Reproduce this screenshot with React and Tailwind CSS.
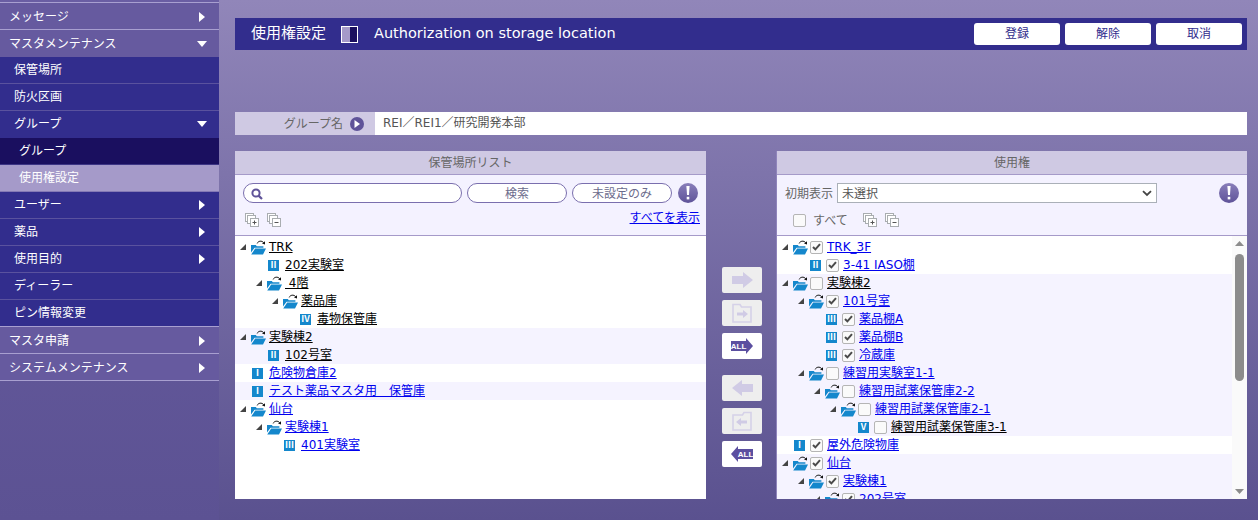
import React from "react";

function Tri({ dir = "right" }) {
  return dir === "right" ? (
    <svg width="6" height="10" viewBox="0 0 6 10"><polygon points="0,0 6,5 0,10" fill="#fff" /></svg>
  ) : (
    <svg width="10" height="6" viewBox="0 0 10 6"><polygon points="0,0 10,0 5,6" fill="#fff" /></svg>
  );
}

function NavRow({ label, kind, arrow }) {
  const styles = {
    top: "bg-[#665a9f] border-[#a89fd0] pl-[9px] pt-[1px]",
    topOpen: "bg-[#665a9f] border-[#665a9f] pl-[9px] pt-[1px]",
    sub: "bg-[#322d8d] border-[#5a529e] pl-[14px]",
    subOpen: "bg-[#322d8d] border-[#322d8d] pl-[14px]",
    leaf: "bg-[#1a0f5f] border-[#3d3585] pl-[19px]",
    active: "bg-[#a59ac9] border-[#8479b5] pl-[19px]",
    subLast: "bg-[#322d8d] border-[#a89fd0] pl-[14px]",
  };
  return (
    <div className={`flex items-center h-[27px] border-b text-[12px] text-white ${styles[kind]}`}>
      <span className="flex-1">{label}</span>
      {arrow && (
        <span className="w-[10px] mr-[12px] flex justify-center">
          <Tri dir={arrow} />
        </span>
      )}
    </div>
  );
}

function Sidebar() {
  return (
    <nav className="w-[219px] shrink-0 h-[520px] bg-linear-to-b from-[#6a5ea3] to-[#5c5293]">
      <div className="pt-[2px] border-b border-[#a89fd0]" />
      <NavRow label="メッセージ" kind="top" arrow="right" />
      <NavRow label="マスタメンテナンス" kind="topOpen" arrow="down" />
      <NavRow label="保管場所" kind="sub" />
      <NavRow label="防火区画" kind="sub" />
      <NavRow label="グループ" kind="subOpen" arrow="down" />
      <NavRow label="グループ" kind="leaf" />
      <NavRow label="使用権設定" kind="active" />
      <NavRow label="ユーザー" kind="sub" arrow="right" />
      <NavRow label="薬品" kind="sub" arrow="right" />
      <NavRow label="使用目的" kind="sub" arrow="right" />
      <NavRow label="ディーラー" kind="sub" />
      <NavRow label="ピン情報変更" kind="subLast" />
      <NavRow label="マスタ申請" kind="top" arrow="right" />
      <NavRow label="システムメンテナンス" kind="top" arrow="right" />
    </nav>
  );
}

function Info() {
  return (
    <span className="w-[20px] h-[20px] rounded-full bg-linear-to-b from-[#8a7fba] to-[#5f5399] flex items-center justify-center shrink-0">
      <svg width="4" height="14" viewBox="0 0 4 14">
        <polygon points="0.4,0 3.6,0 3,9 1,9" fill="#fff" />
        <rect x="0.7" y="10.8" width="2.6" height="2.6" fill="#fff" />
      </svg>
    </span>
  );
}

function StackIcon({ minus }) {
  return (
    <svg width="14" height="14" viewBox="0 0 14 14" className="shrink-0" fill="#fff" stroke="#a9adb0">
      <rect x="0.5" y="0.5" width="8" height="8" />
      <rect x="2.5" y="2.5" width="8" height="8" />
      <rect x="5.5" y="5.5" width="8" height="8" />
      <path d={minus ? "M7.5 9.5h4" : "M7.5 9.5h4M9.5 7.5v4"} stroke="#555" />
    </svg>
  );
}

function Folder() {
  return (
    <svg width="15" height="15" viewBox="0 0 15 15" className="shrink-0">
      <path d="M6.2 3.4 C7.2 0.8 10.8 0.4 12.6 2.6" fill="none" stroke="#111" strokeWidth="1" />
      <polygon points="14,1.2 14,4.4 11,3.6" fill="#111" />
      <path d="M0 5 H4.8 L5.8 6.2 H12.4 V7.8 H3.6 L0 12.6 Z" fill="#1487cc" />
      <polygon points="4.2,8.6 15,8.6 12,14.4 0.2,14.4" fill="#1487cc" />
    </svg>
  );
}

function Expander() {
  return (
    <svg width="6" height="6" viewBox="0 0 6 6" className="shrink-0">
      <polygon points="6,0 6,6 0,6" fill="#444" />
    </svg>
  );
}

function Badge({ n }) {
  return (
    <span className="w-[11px] h-[11px] shrink-0 bg-[#1487cc] text-white flex items-center justify-center text-[9px] leading-none font-bold font-['Liberation_Serif','Noto_Sans_CJK_JP',serif]">
      {n}
    </span>
  );
}

function Check({ on }) {
  return (
    <span className="w-[13px] h-[13px] shrink-0 rounded-[2px] border border-[#b5b5b5] bg-[#fafafa] flex items-center justify-center">
      {on && (
        <svg width="9" height="8" viewBox="0 0 9 8">
          <path d="M1 4 L3.4 6.4 L8 1.2" fill="none" stroke="#4a4a4a" strokeWidth="2" />
        </svg>
      )}
    </span>
  );
}

const INDENT = {
  L0: "pl-[5px]",
  L1: "pl-[21px]",
  L2: "pl-[37px]",
  L3: "pl-[53px]",
  L4: "pl-[69px]",
  R0: "pl-[5px]",
  R1: "pl-[21px]",
  R2: "pl-[37px]",
  R3: "pl-[53px]",
  R4: "pl-[69px]",
};

function Row({ side, depth, text, blue, badge, shade, check }) {
  const hasCheck = check !== undefined;
  return (
    <div
      className={`flex items-center h-[18px] shrink-0 text-[12px] leading-none ${INDENT[side + depth]} ${shade ? "bg-[#f5f3ff]" : ""}`}
    >
      {badge ? (
        <span className="ml-[12px] shrink-0 flex items-center">
          <Badge n={badge} />
        </span>
      ) : (
        <>
          <Expander />
          <span className="ml-[5px] shrink-0">
            <Folder />
          </span>
        </>
      )}
      {hasCheck && (
        <span className={badge ? "ml-[5px]" : "ml-[2px]"}>
          <Check on={check} />
        </span>
      )}
      <span
        className={`underline whitespace-pre ${hasCheck ? "ml-[4px]" : badge ? "ml-[6px]" : "ml-[3px]"} ${blue ? "text-[#0000ee]" : "text-black"}`}
      >
        {text}
      </span>
    </div>
  );
}

function Pill({ children, className }) {
  return (
    <div
      className={`h-[20px] rounded-full border border-[#7a6fae] bg-white text-[12px] text-[#6b6b8c] flex items-center justify-center pt-[1px] ${className}`}
    >
      {children}
    </div>
  );
}

function PanelHead({ title }) {
  return (
    <div className="h-[24px] shrink-0 bg-[#cfc9e3] border-b border-[#a59ac9] flex items-center justify-center text-[12px] text-[#666]">
      {title}
    </div>
  );
}

function LeftPanel() {
  const s = "L";
  return (
    <section className="w-[471px] h-[348px] flex flex-col shrink-0">
      <PanelHead title="保管場所リスト" />
      <div className="h-[61px] shrink-0 bg-[#f4f2ff] border-b border-[#a59ac9] px-[8px] pt-[8px]">
        <div className="flex items-center">
          <Pill className="w-[219px] !justify-start pl-[7px]">
            <svg width="12" height="12" viewBox="0 0 12 12">
              <circle cx="5" cy="5" r="3.6" fill="none" stroke="#5f5399" strokeWidth="2" />
              <path d="M7.6 7.6 L11 11" stroke="#5f5399" strokeWidth="2.2" />
            </svg>
          </Pill>
          <Pill className="w-[100px] ml-[5px]">検索</Pill>
          <Pill className="w-[100px] ml-[5px]">未設定のみ</Pill>
          <span className="ml-[6px] -mt-[1px]">
            <Info />
          </span>
        </div>
        <div className="flex items-center mt-[10px] pl-[2px]">
          <StackIcon />
          <span className="ml-[8px]">
            <StackIcon minus />
          </span>
          <span className="ml-auto mr-[-2px] -mt-[4px] text-[12px] leading-none underline text-[#0000ee]">
            すべてを表示
          </span>
        </div>
      </div>
      <div className="flex-1 bg-white pt-[2px] overflow-hidden flex flex-col">
        <Row side={s} depth={0} text="TRK" />
        <Row side={s} depth={1} text="202実験室" badge="Ⅱ" />
        <Row side={s} depth={1} text=" 4階" />
        <Row side={s} depth={2} text="薬品庫" />
        <Row side={s} depth={3} text="毒物保管庫" badge="Ⅳ" />
        <Row side={s} depth={0} text="実験棟2" shade />
        <Row side={s} depth={1} text="102号室" badge="Ⅱ" shade />
        <Row side={s} depth={0} text="危険物倉庫2" badge="Ⅰ" blue />
        <Row side={s} depth={0} text="テスト薬品マスタ用　保管庫" badge="Ⅰ" blue shade />
        <Row side={s} depth={0} text="仙台" blue />
        <Row side={s} depth={1} text="実験棟1" blue />
        <Row side={s} depth={2} text="401実験室" badge="Ⅲ" blue />
      </div>
    </section>
  );
}

function RightPanel() {
  const s = "R";
  return (
    <section className="w-[471px] h-[348px] flex flex-col shrink-0 border-l border-[#8f84bb]">
      <PanelHead title="使用権" />
      <div className="h-[61px] shrink-0 bg-[#f4f2ff] border-b border-[#a59ac9] pt-[8px]">
        <div className="flex items-center">
          <span className="ml-[8px] w-[52px] pt-[1px] text-[12px] text-[#666] leading-none">初期表示</span>
          <div className="w-[320px] h-[20px] border border-[#aab0b8] bg-white flex items-center pl-[4px] pr-[4px] text-[12px] text-[#555]">
            <span className="flex-1 pt-[2px]">未選択</span>
            <svg width="10" height="7" viewBox="0 0 10 7">
              <path d="M1 1.2 L5 5 L9 1.2" fill="none" stroke="#444" strokeWidth="1.8" />
            </svg>
          </div>
          <span className="ml-auto mr-[8px] -mt-[1px]">
            <Info />
          </span>
        </div>
        <div className="flex items-center mt-[10px] pl-[16px]">
          <Check />
          <span className="ml-[7px] w-[50px] pt-[1px] text-[12px] text-[#666] leading-none">すべて</span>
          <StackIcon />
          <span className="ml-[8px]">
            <StackIcon minus />
          </span>
        </div>
      </div>
      <div className="flex-1 min-h-0 bg-white flex overflow-hidden">
        <div className="flex-1 pt-[2px] overflow-hidden flex flex-col">
          <Row side={s} depth={0} text="TRK_3F" blue check />
          <Row side={s} depth={1} text="3-41 IASO棚" badge="Ⅱ" blue check />
          <Row side={s} depth={0} text="実験棟2" shade check={false} />
          <Row side={s} depth={1} text="101号室" blue shade check />
          <Row side={s} depth={2} text="薬品棚A" badge="Ⅲ" blue shade check />
          <Row side={s} depth={2} text="薬品棚B" badge="Ⅲ" blue shade check />
          <Row side={s} depth={2} text="冷蔵庫" badge="Ⅲ" blue shade check />
          <Row side={s} depth={1} text="練習用実験室1-1" blue shade check={false} />
          <Row side={s} depth={2} text="練習用試薬保管庫2-2" blue shade check={false} />
          <Row side={s} depth={3} text="練習用試薬保管庫2-1" blue shade check={false} />
          <Row side={s} depth={4} text="練習用試薬保管庫3-1" badge="Ⅴ" shade check={false} />
          <Row side={s} depth={0} text="屋外危険物庫" badge="Ⅰ" blue check />
          <Row side={s} depth={0} text="仙台" blue shade check />
          <Row side={s} depth={1} text="実験棟1" blue shade check />
          <Row side={s} depth={2} text="202号室" blue shade check />
        </div>
        <div className="w-[15px] shrink-0 bg-[#fafafa] flex flex-col items-center pt-[5px] pb-[5px]">
          <svg width="9" height="5" viewBox="0 0 9 5" className="shrink-0">
            <polygon points="4.5,0 9,5 0,5" fill="#8c8c8c" />
          </svg>
          <div className="w-[9px] h-[127px] mt-[8px] rounded-full bg-[#8c8c8c]" />
          <svg width="9" height="5" viewBox="0 0 9 5" className="mt-auto shrink-0">
            <polygon points="0,0 9,0 4.5,5" fill="#8c8c8c" />
          </svg>
        </div>
      </div>
    </section>
  );
}

function MoveBtn({ children, on, className = "" }) {
  return (
    <div
      className={`w-[40px] h-[26px] rounded-[2px] flex items-center justify-center ${on ? "bg-white" : "bg-[#eeeeee]"} ${className}`}
    >
      {children}
    </div>
  );
}

function Arrow({ left }) {
  return (
    <svg width="21" height="16" viewBox="0 0 21 16" className={left ? "-scale-x-100" : ""}>
      <polygon points="0,4 11,4 11,0 21,8 11,16 11,12 0,12" fill="#d0cbe5" />
    </svg>
  );
}

function FolderMove({ left }) {
  return (
    <svg width="20" height="20" viewBox="0 0 20 20" className={left ? "-scale-x-100" : ""}>
      <path d="M1 19 V1.5 H8 L9.5 4 H19 V19 Z" fill="none" stroke="#d5d1e8" strokeWidth="1.6" />
      <polygon points="5,9.5 11,9.5 11,7 16,11 11,15 11,12.5 5,12.5" fill="#d0cbe5" />
    </svg>
  );
}

function AllBtn({ left }) {
  return left ? (
    <svg width="22" height="16" viewBox="0 0 22 16">
      <polygon points="0,8 7,0 7,3 22,3 22,13 7,13 7,16" fill="#5b4fa0" />
      <text x="14.5" y="11.4" textAnchor="middle" fontSize="8" fontWeight="700" fill="#fff" fontFamily="'Liberation Sans', sans-serif">ALL</text>
    </svg>
  ) : (
    <svg width="22" height="16" viewBox="0 0 22 16">
      <polygon points="22,8 15,0 15,3 0,3 0,13 15,13 15,16" fill="#5b4fa0" />
      <text x="7.5" y="11.4" textAnchor="middle" fontSize="8" fontWeight="700" fill="#fff" fontFamily="'Liberation Sans', sans-serif">ALL</text>
    </svg>
  );
}

function Center() {
  return (
    <div className="w-[70px] shrink-0 flex flex-col items-center pl-[2px] pt-[116px] gap-[7px]">
      <MoveBtn><Arrow /></MoveBtn>
      <MoveBtn><FolderMove /></MoveBtn>
      <MoveBtn on><AllBtn /></MoveBtn>
      <MoveBtn className="mt-[9px]"><Arrow left /></MoveBtn>
      <MoveBtn><FolderMove left /></MoveBtn>
      <MoveBtn on><AllBtn left /></MoveBtn>
    </div>
  );
}

function TopBtn({ children }) {
  return (
    <button className="w-[86px] h-[22px] bg-white rounded-[3px] text-[12px] leading-none text-[#322d8d]">
      {children}
    </button>
  );
}

export default function App() {
  return (
    <div className="w-[1258px] h-[520px] overflow-hidden flex bg-linear-to-b from-[#9186b9] to-[#5a518f] font-['DejaVu_Sans','Noto_Sans_CJK_JP',sans-serif]">
      <Sidebar />
      <main className="flex-1 min-w-0 pl-[16px] pr-[11px] pt-[18px]">
        <header className="h-[32px] bg-[#322d8d] flex items-center text-white">
          <h1 className="ml-[16px] w-[90px] pb-[2px] text-[15px] font-normal leading-none">使用権設定</h1>
          <span className="w-[17px] h-[17px] border border-white flex shrink-0">
            <span className="flex-1 bg-[#a59ac9]" />
            <span className="flex-1 bg-[#1a0f5f]" />
          </span>
          <span className="ml-[16px] pb-[2px] text-[14.5px] leading-none">Authorization on storage location</span>
          <div className="ml-auto mr-[5px] flex gap-[5px]">
            <TopBtn>登録</TopBtn>
            <TopBtn>解除</TopBtn>
            <TopBtn>取消</TopBtn>
          </div>
        </header>
        <div className="mt-[62px] h-[23px] flex">
          <div className="w-[140px] bg-[#cfc9e3] flex items-center justify-end pr-[11px] text-[12px] text-[#666]">
            <span>グループ名</span>
            <span className="ml-[7px] w-[14px] h-[14px] rounded-full bg-[#5f5399] flex items-center justify-center">
              <svg width="6" height="8" viewBox="0 0 6 8"><polygon points="0.5,0 6,4 0.5,8" fill="#fff" /></svg>
            </span>
          </div>
          <div className="flex-1 bg-white flex items-center pl-[8px] pb-[1px] text-[12px] text-[#555]">
            REI／REI1／研究開発本部
          </div>
        </div>
        <div className="mt-[16px] flex">
          <LeftPanel />
          <Center />
          <RightPanel />
        </div>
      </main>
    </div>
  );
}
